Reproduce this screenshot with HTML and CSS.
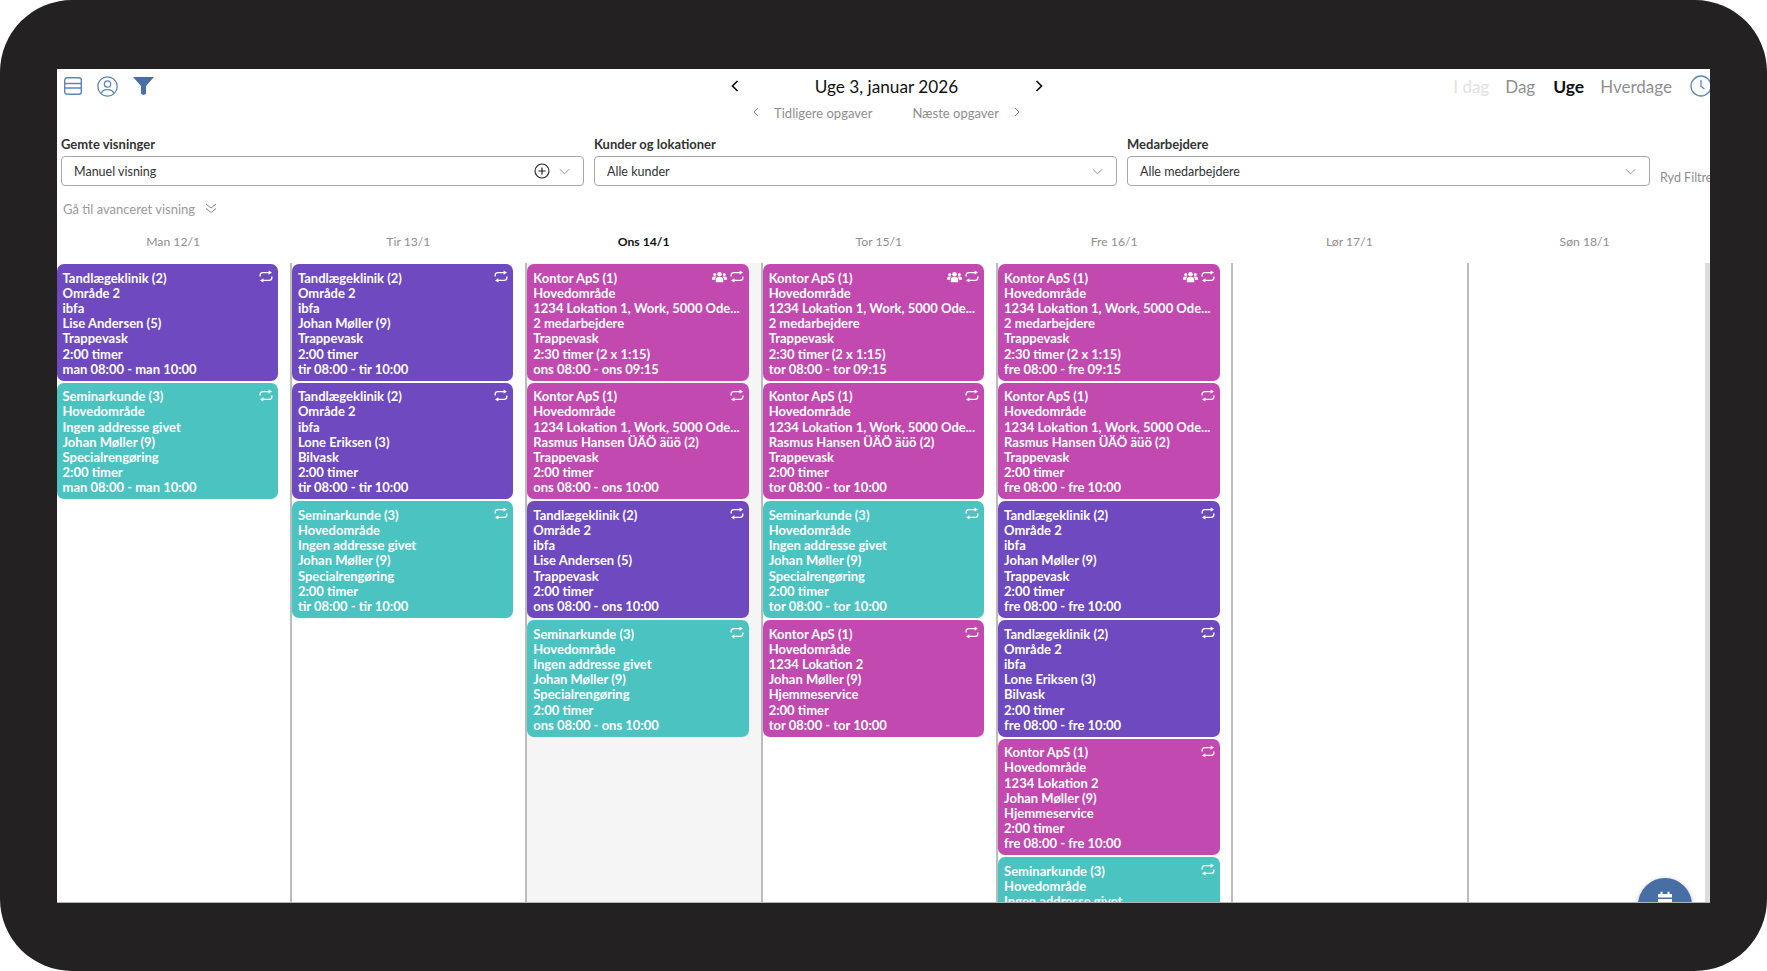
FILE: index.html
```html
<!DOCTYPE html>
<html lang="da">
<head>
<meta charset="utf-8">
<title>Uge 3, januar 2026</title>
<link rel="stylesheet" href="styles.css">
</head>
<body>
<svg class="defs" width="0" height="0" aria-hidden="true">
  <symbol id="repeat" viewBox="0 0 14 13">
    <path d="M1.2 6.5V5.2A2.6 2.6 0 0 1 3.8 2.6H10" fill="none" stroke="currentColor" stroke-width="1.4"/>
    <path d="M9.6 .4 13 2.6 9.6 4.8Z" fill="currentColor"/>
    <path d="M12.8 6.5V7.8A2.6 2.6 0 0 1 10.2 10.4H4" fill="none" stroke="currentColor" stroke-width="1.4"/>
    <path d="M4.4 8.2 1 10.4 4.4 12.6Z" fill="currentColor"/>
  </symbol>
  <symbol id="people" viewBox="0 0 16 12">
    <circle cx="8" cy="3" r="2.4" fill="currentColor"/>
    <circle cx="2.9" cy="3.4" r="1.6" fill="currentColor"/>
    <circle cx="13.1" cy="3.4" r="1.6" fill="currentColor"/>
    <path d="M4 11.5V9a3 3 0 0 1 3-3h2a3 3 0 0 1 3 3v2.5Z" fill="currentColor"/>
    <path d="M0 9V7.5A2 2 0 0 1 2 5.5H4.5Q3.3 6.7 3.2 9ZM16 9V7.5A2 2 0 0 0 14 5.5H11.5Q12.7 6.7 12.8 9Z" fill="currentColor"/>
  </symbol>
  <symbol id="chev" viewBox="0 0 14 8">
    <path d="M1 1 7 7 13 1" fill="none" stroke="currentColor" stroke-width="1"/>
  </symbol>
</svg>
<div class="device">
<main class="screen">
  <header class="topbar">
    <div class="tools">
      <svg class="ic-list" viewBox="0 0 18 18"><rect x=".7" y=".7" width="16.6" height="16.6" rx="2.5" fill="none" stroke="#5b86bd" stroke-width="1.4"/><path d="M1 6.5H17M1 11H17" stroke="#5b86bd" stroke-width="1.6"/></svg>
      <svg class="ic-user" viewBox="0 0 21 21"><circle cx="10.5" cy="10.5" r="9.7" fill="none" stroke="#5b86bd" stroke-width="1.3"/><circle cx="10.5" cy="8" r="3.2" fill="none" stroke="#5b86bd" stroke-width="1.3"/><path d="M4.3 17.5C5 14.5 7.5 13.6 10.5 13.6S16 14.5 16.7 17.5" fill="none" stroke="#5b86bd" stroke-width="1.3"/></svg>
      <svg class="ic-filter" viewBox="0 0 21 18"><path d="M0 0H21L13 9V17L10 18 8 16.5V9Z" fill="#476ea5"/></svg>
    </div>
    <div class="week">
      <svg class="nav-chev" viewBox="0 0 8 12"><path d="M6.5 1 1.5 6 6.5 11" fill="none" stroke="#111" stroke-width="1.7"/></svg>
      <h1 class="week-title">Uge 3, januar 2026</h1>
      <svg class="nav-chev" viewBox="0 0 8 12"><path d="M1.5 1 6.5 6 1.5 11" fill="none" stroke="#111" stroke-width="1.7"/></svg>
    </div>
    <nav class="modes">
      <span class="mode mode-off">I dag</span>
      <span class="mode">Dag</span>
      <span class="mode mode-on">Uge</span>
      <span class="mode">Hverdage</span>
      <svg class="ic-clock" viewBox="0 0 22 22"><circle cx="11" cy="11" r="10" fill="none" stroke="#5b86bd" stroke-width="1.3"/><path d="M11 5V11.5L14.5 14" fill="none" stroke="#5b86bd" stroke-width="1.3"/></svg>
    </nav>
  </header>

  <div class="subnav">
    <svg class="sub-chev" viewBox="0 0 6 10"><path d="M5 1 1 5 5 9" fill="none" stroke="#888" stroke-width="1"/></svg>
    <span class="sub-prev">Tidligere opgaver</span>
    <span class="sub-next">Næste opgaver</span>
    <svg class="sub-chev" viewBox="0 0 6 10"><path d="M1 1 5 5 1 9" fill="none" stroke="#888" stroke-width="1"/></svg>
  </div>

  <section class="filters">
    <div class="field">
      <label class="field-label">Gemte visninger</label>
      <div class="select"><span class="select-text">Manuel visning</span>
        <svg class="ic-plus" viewBox="0 0 16 16"><circle cx="8" cy="8" r="7" fill="none" stroke="#222" stroke-width="1.1"/><path d="M8 4.5V11.5M4.5 8H11.5" stroke="#222" stroke-width="1.2"/></svg>
        <svg class="chev"><use href="#chev"/></svg></div>
    </div>
    <div class="field">
      <label class="field-label">Kunder og lokationer</label>
      <div class="select"><span class="select-text">Alle kunder</span><svg class="chev"><use href="#chev"/></svg></div>
    </div>
    <div class="field">
      <label class="field-label">Medarbejdere</label>
      <div class="select"><span class="select-text">Alle medarbejdere</span><svg class="chev"><use href="#chev"/></svg></div>
    </div>
    <span class="clear">Ryd Filtre</span>
  </section>

  <div class="advanced">
    <span>Gå til avanceret visning</span>
    <svg class="adv-chev" viewBox="0 0 12 11"><path d="M1 1 6 5 11 1M1 5.5 6 9.5 11 5.5" fill="none" stroke="#888" stroke-width="1"/></svg>
  </div>

  <div class="days">
    <div class="day">Man 12/1</div>
    <div class="day">Tir 13/1</div>
    <div class="day day-today">Ons 14/1</div>
    <div class="day">Tor 15/1</div>
    <div class="day">Fre 16/1</div>
    <div class="day">Lør 17/1</div>
    <div class="day">Søn 18/1</div>
  </div>

  <div class="grid">
    <div class="col">
      <article class="card card-purple"><div class="card-icons"><svg class="ic-repeat"><use href="#repeat"/></svg></div><div class="card-text">Tandlægeklinik (2)
Område 2
ibfa
Lise Andersen (5)
Trappevask
2:00 timer
man 08:00 - man 10:00</div></article>
      <article class="card card-teal"><div class="card-icons"><svg class="ic-repeat"><use href="#repeat"/></svg></div><div class="card-text">Seminarkunde (3)
Hovedområde
Ingen addresse givet
Johan Møller (9)
Specialrengøring
2:00 timer
man 08:00 - man 10:00</div></article>
    </div>
    <div class="col">
      <article class="card card-purple"><div class="card-icons"><svg class="ic-repeat"><use href="#repeat"/></svg></div><div class="card-text">Tandlægeklinik (2)
Område 2
ibfa
Johan Møller (9)
Trappevask
2:00 timer
tir 08:00 - tir 10:00</div></article>
      <article class="card card-purple"><div class="card-icons"><svg class="ic-repeat"><use href="#repeat"/></svg></div><div class="card-text">Tandlægeklinik (2)
Område 2
ibfa
Lone Eriksen (3)
Bilvask
2:00 timer
tir 08:00 - tir 10:00</div></article>
      <article class="card card-teal"><div class="card-icons"><svg class="ic-repeat"><use href="#repeat"/></svg></div><div class="card-text">Seminarkunde (3)
Hovedområde
Ingen addresse givet
Johan Møller (9)
Specialrengøring
2:00 timer
tir 08:00 - tir 10:00</div></article>
    </div>
    <div class="col col-today">
      <article class="card card-pink"><div class="card-icons"><svg class="ic-people"><use href="#people"/></svg><svg class="ic-repeat"><use href="#repeat"/></svg></div><div class="card-text">Kontor ApS (1)
Hovedområde
1234 Lokation 1, Work, 5000 Ode...
2 medarbejdere
Trappevask
2:30 timer (2 x 1:15)
ons 08:00 - ons 09:15</div></article>
      <article class="card card-pink"><div class="card-icons"><svg class="ic-repeat"><use href="#repeat"/></svg></div><div class="card-text">Kontor ApS (1)
Hovedområde
1234 Lokation 1, Work, 5000 Ode...
Rasmus Hansen ÜÄÖ äüö (2)
Trappevask
2:00 timer
ons 08:00 - ons 10:00</div></article>
      <article class="card card-purple"><div class="card-icons"><svg class="ic-repeat"><use href="#repeat"/></svg></div><div class="card-text">Tandlægeklinik (2)
Område 2
ibfa
Lise Andersen (5)
Trappevask
2:00 timer
ons 08:00 - ons 10:00</div></article>
      <article class="card card-teal"><div class="card-icons"><svg class="ic-repeat"><use href="#repeat"/></svg></div><div class="card-text">Seminarkunde (3)
Hovedområde
Ingen addresse givet
Johan Møller (9)
Specialrengøring
2:00 timer
ons 08:00 - ons 10:00</div></article>
    </div>
    <div class="col">
      <article class="card card-pink"><div class="card-icons"><svg class="ic-people"><use href="#people"/></svg><svg class="ic-repeat"><use href="#repeat"/></svg></div><div class="card-text">Kontor ApS (1)
Hovedområde
1234 Lokation 1, Work, 5000 Ode...
2 medarbejdere
Trappevask
2:30 timer (2 x 1:15)
tor 08:00 - tor 09:15</div></article>
      <article class="card card-pink"><div class="card-icons"><svg class="ic-repeat"><use href="#repeat"/></svg></div><div class="card-text">Kontor ApS (1)
Hovedområde
1234 Lokation 1, Work, 5000 Ode...
Rasmus Hansen ÜÄÖ äüö (2)
Trappevask
2:00 timer
tor 08:00 - tor 10:00</div></article>
      <article class="card card-teal"><div class="card-icons"><svg class="ic-repeat"><use href="#repeat"/></svg></div><div class="card-text">Seminarkunde (3)
Hovedområde
Ingen addresse givet
Johan Møller (9)
Specialrengøring
2:00 timer
tor 08:00 - tor 10:00</div></article>
      <article class="card card-pink"><div class="card-icons"><svg class="ic-repeat"><use href="#repeat"/></svg></div><div class="card-text">Kontor ApS (1)
Hovedområde
1234 Lokation 2
Johan Møller (9)
Hjemmeservice
2:00 timer
tor 08:00 - tor 10:00</div></article>
    </div>
    <div class="col">
      <article class="card card-pink"><div class="card-icons"><svg class="ic-people"><use href="#people"/></svg><svg class="ic-repeat"><use href="#repeat"/></svg></div><div class="card-text">Kontor ApS (1)
Hovedområde
1234 Lokation 1, Work, 5000 Ode...
2 medarbejdere
Trappevask
2:30 timer (2 x 1:15)
fre 08:00 - fre 09:15</div></article>
      <article class="card card-pink"><div class="card-icons"><svg class="ic-repeat"><use href="#repeat"/></svg></div><div class="card-text">Kontor ApS (1)
Hovedområde
1234 Lokation 1, Work, 5000 Ode...
Rasmus Hansen ÜÄÖ äüö (2)
Trappevask
2:00 timer
fre 08:00 - fre 10:00</div></article>
      <article class="card card-purple"><div class="card-icons"><svg class="ic-repeat"><use href="#repeat"/></svg></div><div class="card-text">Tandlægeklinik (2)
Område 2
ibfa
Johan Møller (9)
Trappevask
2:00 timer
fre 08:00 - fre 10:00</div></article>
      <article class="card card-purple"><div class="card-icons"><svg class="ic-repeat"><use href="#repeat"/></svg></div><div class="card-text">Tandlægeklinik (2)
Område 2
ibfa
Lone Eriksen (3)
Bilvask
2:00 timer
fre 08:00 - fre 10:00</div></article>
      <article class="card card-pink"><div class="card-icons"><svg class="ic-repeat"><use href="#repeat"/></svg></div><div class="card-text">Kontor ApS (1)
Hovedområde
1234 Lokation 2
Johan Møller (9)
Hjemmeservice
2:00 timer
fre 08:00 - fre 10:00</div></article>
      <article class="card card-teal"><div class="card-icons"><svg class="ic-repeat"><use href="#repeat"/></svg></div><div class="card-text">Seminarkunde (3)
Hovedområde
Ingen addresse givet
Johan Møller (9)
Specialrengøring
2:00 timer
fre 08:00 - fre 10:00</div></article>
    </div>
    <div class="col"></div>
    <div class="col"></div>
  </div>

  <button class="fab" aria-label="Kalender">
    <svg class="ic-cal" viewBox="0 0 16 16"><path d="M1 3H15V6.5H1ZM1 8H15V15H1ZM3.5 .8H5.5V3H3.5ZM10.5 .8H12.5V3H10.5Z" fill="#fff"/></svg>
  </button>
</main>
</div>
</body>
</html>
```

FILE: styles.css
```css
* { box-sizing: border-box; }
html, body { margin: 0; height: 100%; background: #fff; overflow: hidden; }
body { font-family: "Lato", "Noto Sans", sans-serif; }
.defs { position: absolute; }

.device {
  width: 1767px;
  height: 971px;
  background: #232122;
  border-radius: 72px;
  padding: 69px 57px 68px;
}
.screen {
  position: relative;
  width: 1653px;
  height: 834px;
  background: #fff;
  overflow: hidden;
  border-bottom: 1px solid #b5b5b5;
}

.topbar {
  display: grid;
  grid-template-columns: 1fr auto 1fr;
  align-items: center;
  height: 34px;
}
.tools { display: flex; align-items: center; padding-left: 7px; }
.ic-list { width: 18px; height: 18px; }
.ic-user { width: 21px; height: 21px; margin-left: 15px; }
.ic-filter { width: 21px; height: 18px; margin-left: 15px; }

.week { display: flex; align-items: center; gap: 76px; justify-content: center; padding-left: 6px; }
.nav-chev { width: 8px; height: 12px; }
.week-title { margin: 0; font-size: 17.2px; font-weight: 400; color: #111; width: 144px; text-align: center; white-space: nowrap; }

.modes { display: flex; justify-content: flex-end; align-items: center; }
.mode { font-size: 17px; color: #8f8f8f; margin-right: 16px; white-space: nowrap; }
.mode-off { color: #e2e2e2; }
.mode-on { color: #111; font-weight: 700; font-size: 17.5px; margin-left: 2px; }
.ic-clock { width: 22px; height: 22px; flex: none; margin-left: 2px; margin-right: -2px; }

.subnav { display: flex; align-items: center; justify-content: center; height: 20px; font-size: 13px; color: #8e8e8e; padding-left: 6px; }
.sub-chev { width: 6px; height: 10px; margin-top: -3px; }
.sub-prev { margin-left: 15px; }
.sub-next { margin-left: 40px; margin-right: 15px; }

.filters {
  display: flex;
  align-items: flex-start;
  gap: 10.5px;
  padding-left: 4px;
  margin-top: 13px;
}
.field { width: 522.5px; flex: none; }
.field-label { display: block; font-size: 13px; font-weight: 700; color: #333; height: 20px; line-height: 17px; }
.select {
  display: flex;
  align-items: center;
  height: 30px;
  border: 1px solid #a8a8a8;
  border-radius: 4px;
  padding: 0 13px 0 12px;
  font-size: 12.5px;
  color: #333;
}
.select-text { flex: 1; }
.ic-plus { width: 16px; height: 16px; margin-right: 8.5px; }
.chev { width: 11px; height: 7px; color: #777; }
.clear { font-size: 12.5px; color: #8e8e8e; white-space: nowrap; margin-top: 34px; }

.advanced { display: flex; align-items: center; gap: 10px; padding-left: 6px; margin-top: 14px; font-size: 13px; color: #9a9a9a; height: 17px; }
.adv-chev { width: 12px; height: 11px; }

.days {
  display: grid;
  grid-template-columns: repeat(7, 235.25px);
  margin-left: -1.5px;
  margin-top: 16px;
  height: 30px;
}
.day { text-align: center; font-size: 12.2px; color: #8e8e8e; line-height: 17px; }
.day-today { color: #111; font-weight: 700; }

.grid {
  display: grid;
  grid-template-columns: repeat(7, 235.4px);
  margin-left: -2.5px;
  height: 640px;
  border-right: 5px solid #dcdcdc;
  width: 1655.5px;
}
.col { border-left: 2px solid #bcbcbc; padding-top: 1px; }
.col-today { background: #f5f5f5; }

.card {
  position: relative;
  width: 221.5px;
  height: 116.7px;
  margin-bottom: 2px;
  border-radius: 7px;
  padding: 6.5px 5px 0 6px;
  color: #fff;
  overflow: hidden;
}
.card-purple { background: #6e49c0; }
.card-teal { background: #4bc3c1; }
.card-pink { background: #c149af; }
.card-text { font-size: 13px; font-weight: 700; line-height: 15.2px; white-space: pre-line; }
.card-icons { position: absolute; top: 6px; right: 5px; display: flex; align-items: center; gap: 3px; color: #fff; }
.ic-repeat { width: 14px; height: 13px; }
.ic-people { width: 15px; height: 12px; }

.fab {
  position: absolute;
  right: 18px;
  top: 809px;
  width: 54px;
  height: 54px;
  border: 0;
  padding: 13px 0 0;
  border-radius: 50%;
  background: #476ea5;
  box-shadow: 0 1px 5px rgba(0,0,0,.25);
  display: flex;
  justify-content: center;
  align-items: flex-start;
}
.ic-cal { width: 16px; height: 16px; }
```
